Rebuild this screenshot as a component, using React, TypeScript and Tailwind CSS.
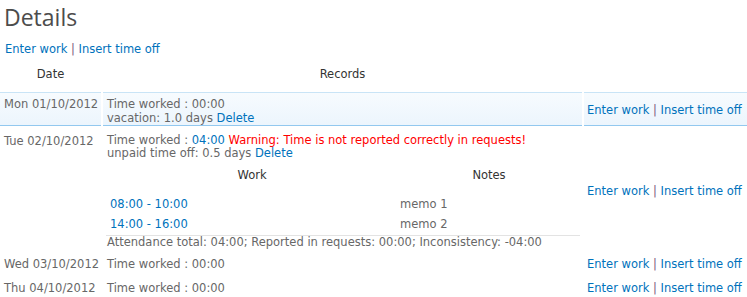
import React from "react";

const Links = () => (
  <span className="whitespace-nowrap">
    <a className="text-[#0072bc]">Enter work</a>
    <span className="text-[#7c5a80]"> | </span>
    <a className="text-[#0072bc]">Insert time off</a>
  </span>
);

const selCell =
  "border-t border-b border-t-[#c9e4f6] border-b-[#92c8ef] bg-gradient-to-b from-[#f7fbfe] to-[#ecf5fd]";

export default function App() {
  return (
    <div className="font-['DejaVu_Sans',Verdana,sans-serif] text-[11.5px] text-[#676767] w-[747px] h-[297px] overflow-hidden bg-white">
      <h1 className="h-[34px] leading-[34px] pl-[4px] text-[23px] text-[#4c4c4c] font-['Open_Sans','DejaVu_Sans',sans-serif]">
        Details
      </h1>
      <div className="mt-[8px] h-[14px] leading-[14px] pl-[5px]">
        <Links />
      </div>
      <table className="table-fixed border-separate [border-spacing:2px_0] -ml-[2px] w-[751px]">
        <colgroup>
          <col className="w-[101px]" />
          <col className="w-[479px]" />
          <col className="w-[163px]" />
        </colgroup>
        <thead>
          <tr className="h-[36px]">
            <th className="font-normal text-[#333] text-center align-middle pt-[2px]">Date</th>
            <th className="font-normal text-[#333] text-center align-middle pt-[2px]">Records</th>
            <th></th>
          </tr>
        </thead>
        <tbody>
          <tr>
            <td className={`${selCell} pl-[4px] align-top pt-[4px] leading-[14px] whitespace-nowrap`}>
              Mon 01/10/2012
            </td>
            <td className={`${selCell} pl-[4px] align-top pt-[4px] pb-0 leading-[14px]`}>
              <div>Time worked : 00:00</div>
              <div>
                vacation: 1.0 days <a className="text-[#0072bc]">Delete</a>
              </div>
            </td>
            <td className={`${selCell} pl-[3px] align-middle leading-[14px] pt-[2px]`}>
              <Links />
            </td>
          </tr>
          <tr>
            <td className="pl-[4px] align-top pt-[9px] leading-[13px] whitespace-nowrap">Tue 02/10/2012</td>
            <td className="pl-[4px] pt-[8px] pb-[4px] align-top">
              <div className="leading-[13px]">
                Time worked : <a className="text-[#0072bc]">04:00</a>{" "}
                <span className="text-[#ff0000]">Warning: Time is not reported correctly in requests!</span>
              </div>
              <div className="leading-[13px]">
                unpaid time off: 0.5 days <a className="text-[#0072bc]">Delete</a>
              </div>
              <table className="table-fixed border-collapse w-[474px] -ml-[1px] mt-[1px]">
                <colgroup>
                  <col className="w-[292px]" />
                  <col className="w-[182px]" />
                </colgroup>
                <thead>
                  <tr className="h-[30px]">
                    <th className="font-normal text-[#333] text-center align-middle">Work</th>
                    <th className="font-normal text-[#333] text-center align-middle">Notes</th>
                  </tr>
                </thead>
                <tbody>
                  <tr className="h-[24px]">
                    <td className="pl-[4px] pt-[3px] align-middle">
                      <a className="text-[#0072bc]">08:00 - 10:00</a>
                    </td>
                    <td className="pl-[2px] pt-[3px] align-middle">memo 1</td>
                  </tr>
                  <tr className="h-[20px] border-b border-b-[#e3e3e3]">
                    <td className="pl-[4px] align-middle">
                      <a className="text-[#0072bc]">14:00 - 16:00</a>
                    </td>
                    <td className="pl-[2px] align-middle">memo 2</td>
                  </tr>
                </tbody>
              </table>
              <div className="leading-[13px]">
                Attendance total: 04:00; Reported in requests: 00:00; Inconsistency: -04:00
              </div>
            </td>
            <td className="pl-[3px] align-middle leading-[14px] pt-[4px]">
              <Links />
            </td>
          </tr>
          <tr className="h-[23px]">
            <td className="pl-[4px] align-middle whitespace-nowrap pt-[1px]">Wed 03/10/2012</td>
            <td className="pl-[4px] align-middle pt-[1px]">Time worked : 00:00</td>
            <td className="pl-[3px] align-middle pt-[1px]">
              <Links />
            </td>
          </tr>
          <tr className="h-[24px]">
            <td className="pl-[4px] align-middle whitespace-nowrap pt-[2px]">Thu 04/10/2012</td>
            <td className="pl-[4px] align-middle pt-[2px]">Time worked : 00:00</td>
            <td className="pl-[3px] align-middle pt-[2px]">
              <Links />
            </td>
          </tr>
        </tbody>
      </table>
    </div>
  );
}
